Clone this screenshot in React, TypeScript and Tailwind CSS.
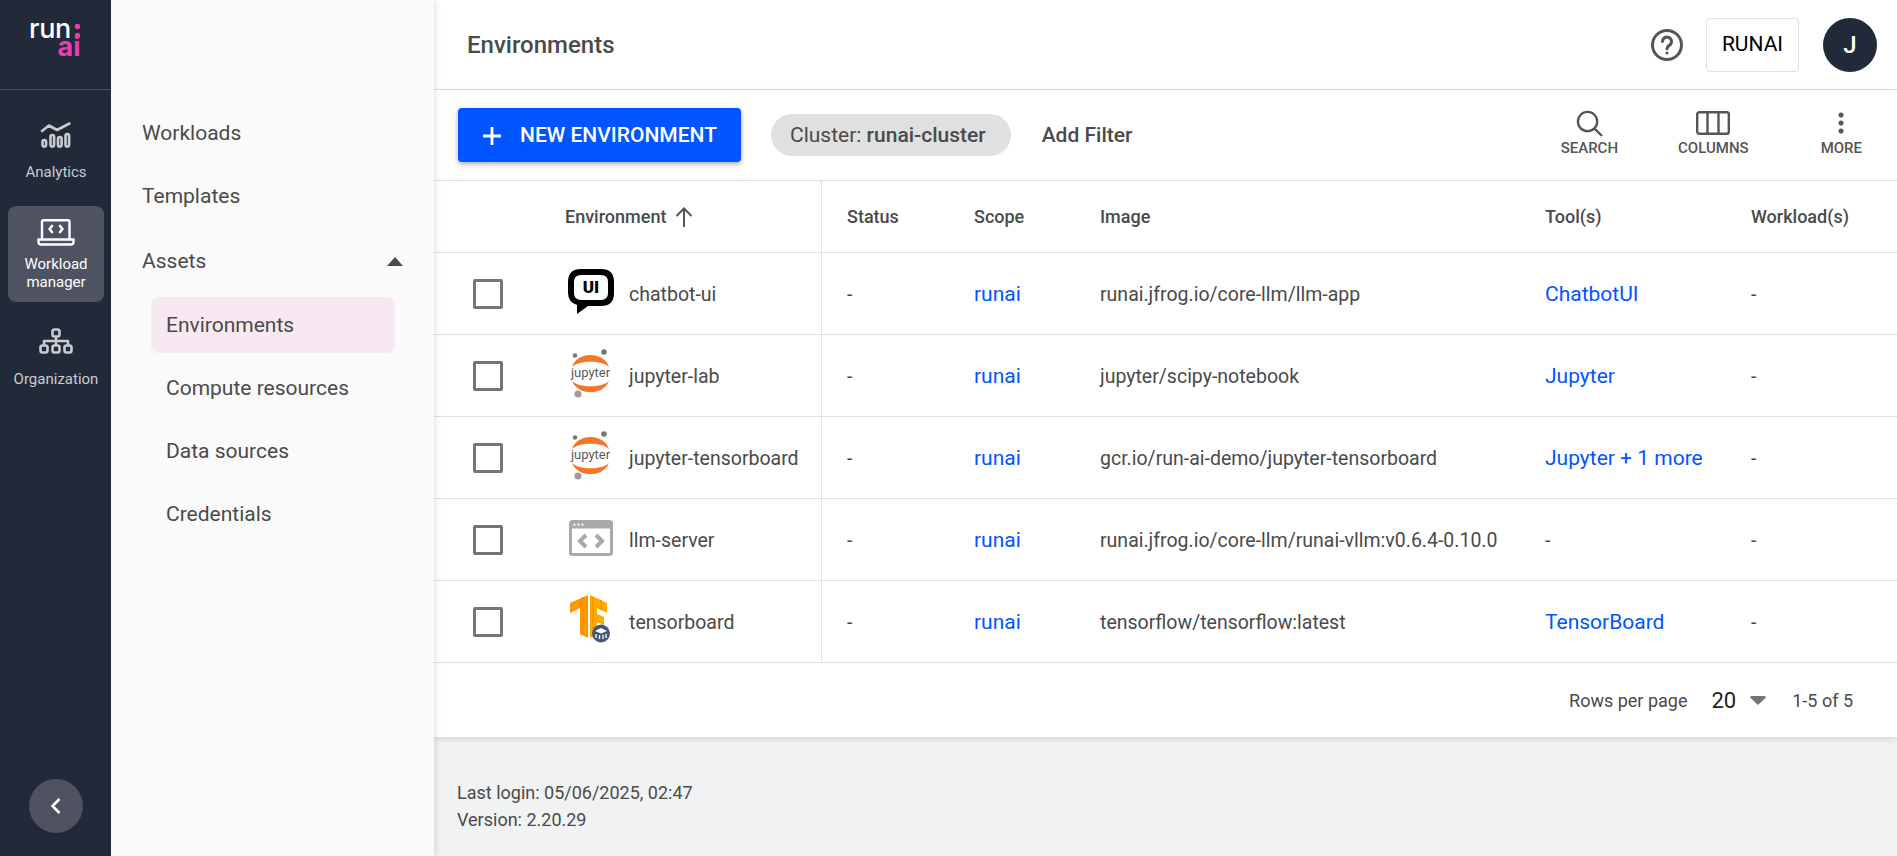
import { ReactNode } from 'react'

function BrandLogo() {
  return (
    <svg className="block" width="111" height="89" viewBox="0 0 111 89">
      <text x="29" y="38" fontFamily="Inter, sans-serif" fontSize="27" fontWeight="500" fill="#ffffff" letterSpacing="-0.3">run</text>
      <circle cx="77.5" cy="26.5" r="2.7" fill="#e83fae" />
      <circle cx="77.5" cy="35.5" r="2.7" fill="#e83fae" />
      <text x="80.5" y="56" textAnchor="end" fontFamily="Inter, sans-serif" fontSize="27" fontWeight="700" fill="#e83fae">ai</text>
    </svg>
  )
}

function AnalyticsIcon() {
  return (
    <svg className="block" width="32" height="26" viewBox="0 0 32 26" fill="none" stroke="#c9cbd0" strokeWidth="2.6" strokeLinecap="round" strokeLinejoin="round">
      <path d="M2 9 L9 3.5 L17 8 L29.5 1.5" />
      <rect x="2.5" y="18" width="3.6" height="6.5" rx="1.8" />
      <rect x="10.5" y="13" width="3.6" height="11.5" rx="1.8" />
      <rect x="18" y="15" width="3.6" height="9.5" rx="1.8" />
      <rect x="25.5" y="12" width="3.6" height="12.5" rx="1.8" />
    </svg>
  )
}

function WorkloadIcon() {
  return (
    <svg className="block" width="38" height="27" viewBox="0 0 38 27" fill="none" stroke="#ffffff" strokeWidth="2.4" strokeLinecap="round" strokeLinejoin="round">
      <path d="M5 19 V2.8 a1.5 1.5 0 0 1 1.5 -1.5 H31 a1.5 1.5 0 0 1 1.5 1.5 V19" />
      <path d="M1.5 20.5 H36.5 V23 a2.5 2.5 0 0 1 -2.5 2.5 H4 a2.5 2.5 0 0 1 -2.5 -2.5 Z" />
      <path d="M15 7 L12.5 10 L15 13 M23 7 L25.5 10 L23 13" strokeWidth="2.6" />
    </svg>
  )
}

function OrganizationIcon() {
  return (
    <svg className="block" width="34" height="26" viewBox="0 0 34 26" fill="none" stroke="#c9cbd0" strokeWidth="2.6" strokeLinejoin="round">
      <rect x="13.5" y="1.5" width="7" height="7" rx="2" />
      <rect x="1.5" y="17.5" width="7" height="7" rx="2" />
      <rect x="13.5" y="17.5" width="7" height="7" rx="2" />
      <rect x="25.5" y="17.5" width="7" height="7" rx="2" />
      <path d="M17 8.5 V17.5 M5 17.5 V13 H29 V17.5" />
    </svg>
  )
}

function ChatbotLogo() {
  return (
    <div className="relative w-[46px] h-[46px] mb-[4px]">
      <svg className="block" width="46" height="46" viewBox="0 0 46 46">
        <path d="M13 0 H33 Q46 0 46 13 V24 Q46 37 33 37 H20 L9 45 V36 Q0 33 0 24 V13 Q0 0 13 0 Z M13 6 Q6 6 6 13 V24 Q6 31 13 31 H33 Q40 31 40 24 V13 Q40 6 33 6 Z" fillRule="evenodd" fill="#000000" />
      </svg>
      <span className="absolute left-0 right-0 top-[9px] text-center text-[17px] leading-[19px] font-black text-black">UI</span>
    </div>
  )
}

function JupyterLogo() {
  return (
    <svg className="block mb-[5px]" width="44" height="49" viewBox="0 0 44 49">
      <circle cx="6" cy="6.5" r="2.2" fill="#767677" />
      <circle cx="35" cy="3" r="2.8" fill="#767677" />
      <circle cx="9" cy="45" r="3.6" fill="#9e9e9e" />
      <path d="M3 18 C8 2 35 2 40 18 C33 11 10 11 3 18 Z" fill="#f37726" />
      <path d="M3 32 C9 47 34 47 40 32 C33 39 10 39 3 32 Z" fill="#f37726" />
      <text x="21.5" y="28" textAnchor="middle" fontSize="13" fontFamily="Roboto, sans-serif" fill="#5a5a5a">jupyter</text>
    </svg>
  )
}

function ServerLogo() {
  return (
    <svg className="block mb-[4px]" width="44" height="36" viewBox="0 0 44 36">
      <rect x="1.5" y="1.5" width="41" height="33" rx="2" fill="none" stroke="#a9a9a9" strokeWidth="3" />
      <path d="M1 3 a2 2 0 0 1 2 -2 H41 a2 2 0 0 1 2 2 V8.5 H1 Z" fill="#a9a9a9" />
      <circle cx="5.5" cy="4.7" r="1.1" fill="#ffffff" />
      <circle cx="9.5" cy="4.7" r="1.1" fill="#ffffff" />
      <circle cx="13.5" cy="4.7" r="1.1" fill="#ffffff" />
      <path d="M17 15 L11 21 L17 27 M27 15 L33 21 L27 27" fill="none" stroke="#a9a9a9" strokeWidth="4" />
    </svg>
  )
}

function TensorLogo() {
  return (
    <svg className="block mb-[5px]" width="42" height="48" viewBox="0 0 42 48">
      <path d="M18 0 V43 L10 39 V13 L0 18 V8 Z" fill="#ff9800" />
      <path d="M20 0 L37 8 V18 L27 13 V19 L34 22 V30 L27 27 V39 L20 43 Z" fill="#ffa800" />
      <path d="M13 2 V40 M23 2 V42 M31 5 V15" stroke="#ff8f00" strokeWidth="1.6" />
      <circle cx="31" cy="38.5" r="9" fill="#44597a" />
      <path d="M25 36 L31 33 L37 36 L31 38.5 Z" fill="#ffffff" />
      <path d="M26 39 V43 M29.5 40 V44 M33 40 V44 M36 39 V43" stroke="#ffffff" strokeWidth="1.3" />
    </svg>
  )
}

type Row = {
  name: string
  logo: ReactNode
  image: string
  tool: string
}

const rows: Row[] = [
  { name: 'chatbot-ui', logo: <ChatbotLogo />, image: 'runai.jfrog.io/core-llm/llm-app', tool: 'ChatbotUI' },
  { name: 'jupyter-lab', logo: <JupyterLogo />, image: 'jupyter/scipy-notebook', tool: 'Jupyter' },
  { name: 'jupyter-tensorboard', logo: <JupyterLogo />, image: 'gcr.io/run-ai-demo/jupyter-tensorboard', tool: 'Jupyter + 1 more' },
  { name: 'llm-server', logo: <ServerLogo />, image: 'runai.jfrog.io/core-llm/runai-vllm:v0.6.4-0.10.0', tool: '-' },
  { name: 'tensorboard', logo: <TensorLogo />, image: 'tensorflow/tensorflow:latest', tool: 'TensorBoard' },
]

const rowGrid = 'grid grid-cols-[79px_309px_152px_126px_445px_206px_1fr] items-center border-b border-[#e0e0e0]'

function RailItem({ icon, label, active, top, gap }: { icon: ReactNode; label: ReactNode; active?: boolean; top: string; gap: string }) {
  return (
    <div className={`ml-2 mr-[7px] h-[96px] flex flex-col items-center ${top} ${active ? 'rounded-lg bg-[#4f5361] text-white' : 'text-[#c9cbd0]'}`}>
      <div className={gap}>{icon}</div>
      <div className="text-[15px] leading-[18px] text-center">{label}</div>
    </div>
  )
}

function ToolButton({ icon, label, className }: { icon: ReactNode; label: string; className?: string }) {
  return (
    <div className={`flex flex-col items-center text-[#555555] ${className ?? ''}`}>
      <div className="h-[28px] mb-[2px] flex items-center justify-center">{icon}</div>
      <div className="text-[15px] leading-[18px] font-medium">{label}</div>
    </div>
  )
}

export default function App() {
  return (
    <div className="flex h-[856px] w-[1897px] overflow-hidden bg-[#f1f2f4] font-['Roboto',sans-serif] text-[#4a4a4a]">
      {/* Icon rail */}
      <aside className="w-[111px] shrink-0 bg-[#222938] flex flex-col">
        <div className="h-[90px] border-b border-[#4a505e] shrink-0">
          <BrandLogo />
        </div>
        <div className="mt-[14px] flex flex-col gap-[6px]">
          <RailItem icon={<AnalyticsIcon />} label="Analytics" top="pt-[18px]" gap="mb-[15px]" />
          <RailItem icon={<WorkloadIcon />} label={<>Workload<br />manager</>} active top="pt-[13px]" gap="mb-[9px]" />
          <RailItem icon={<OrganizationIcon />} label="Organization" top="pt-[20px]" gap="mb-[16px]" />
        </div>
        <div className="mt-auto mb-[23px] self-center w-[54px] h-[54px] rounded-full bg-[#4f5361] flex items-center justify-center">
          <svg width="16" height="20" viewBox="0 0 16 20" fill="none" stroke="#ffffff" strokeWidth="2.6">
            <path d="M11.5 3 L4.5 10 L11.5 17" />
          </svg>
        </div>
      </aside>

      {/* Sub navigation */}
      <nav className="relative z-10 w-[323px] shrink-0 bg-[#fafafa] shadow-[2px_0_6px_rgba(0,0,0,0.1)] pt-[101px] text-[21px]">
        <div className="pl-[31px] pt-[2px] h-[63px] flex items-center">Workloads</div>
        <div className="pl-[31px] pt-[2px] h-[64px] flex items-center">Templates</div>
        <div className="pl-[31px] pr-[31px] h-[66px] flex items-center justify-between">
          <span className="pt-[2px]">Assets</span>
          <svg width="16" height="9" viewBox="0 0 16 9"><path d="M8 0 L16 9 H0 Z" fill="#4a4a4a" /></svg>
        </div>
        <div className="ml-[40px] mr-[39px] mt-[3px] flex flex-col">
          <div className="h-[56px] pl-[15px] pt-[1px] flex items-center rounded-lg bg-[#f8e8f1]">Environments</div>
          <div className="h-[63px] pl-[15px] pt-[2px] mt-[3px] flex items-center">Compute resources</div>
          <div className="h-[63px] pl-[15px] pt-[2px] flex items-center">Data sources</div>
          <div className="h-[63px] pl-[15px] pt-[2px] flex items-center">Credentials</div>
        </div>
      </nav>

      <main className="flex-1 min-w-0 flex flex-col">
        {/* Top bar */}
        <header className="h-[90px] shrink-0 bg-white border-b border-[#e0e0e0] flex items-center pl-[33px] pr-[20px]">
          <h1 className="text-[24px] font-medium">Environments</h1>
          <svg className="ml-auto" width="34" height="34" viewBox="0 0 34 34" fill="none" stroke="#555555" strokeWidth="3">
            <circle cx="17" cy="17" r="14.5" />
            <path d="M12.5 13.5 a4.5 4.5 0 1 1 6.8 3.9 c-1.5 0.9 -2.3 1.7 -2.3 3.4" strokeLinecap="round" />
            <circle cx="17" cy="25" r="0.8" fill="#555555" strokeWidth="1.4" />
          </svg>
          <div className="ml-[22px] w-[93px] h-[54px] rounded border border-[#e0e0e0] flex items-center justify-center text-[21px] text-black">RUNAI</div>
          <div className="ml-[24px] w-[54px] h-[54px] rounded-full bg-[#222938] text-white font-medium text-[24px] flex items-center justify-center">J</div>
        </header>

        <section className="bg-white shrink-0 shadow-[0_2px_6px_rgba(0,0,0,0.12)]">
          {/* Toolbar */}
          <div className="h-[91px] flex items-center pl-[24px] border-b border-[#e0e0e0] relative">
            <button className="h-[54px] w-[283px] rounded bg-[#0055ff] text-white text-[21px] font-medium flex items-center pl-[24px] pt-[1px] shadow-[0_2px_5px_rgba(0,0,0,0.35)]">
              <svg width="20" height="20" viewBox="0 0 20 20" stroke="#ffffff" strokeWidth="2.8"><path d="M10 1 V19 M1 10 H19" /></svg>
              <span className="ml-[18px] pt-[1px]">NEW ENVIRONMENT</span>
            </button>
            <div className="ml-[30px] h-[42px] pl-[19px] pr-[25px] pt-[2px] rounded-full bg-[#e0e0e0] flex items-center text-[21px]">
              <span>Cluster:&nbsp;</span><span className="font-medium">runai-cluster</span>
            </div>
            <div className="ml-[31px] pt-[2px] text-[21px] font-medium">Add Filter</div>
            <div className="ml-auto mr-[35px] mb-[4px] flex items-center">
              <ToolButton
                label="SEARCH"
                icon={
                  <svg width="27" height="27" viewBox="0 0 28 28" fill="none" stroke="#555555" strokeWidth="2.4">
                    <circle cx="12" cy="12" r="10" />
                    <path d="M19 19 L27 27" />
                  </svg>
                }
              />
              <ToolButton
                className="ml-[60px]"
                label="COLUMNS"
                icon={
                  <svg width="34" height="24" viewBox="0 0 34 24" fill="none" stroke="#555555" strokeWidth="2.4">
                    <rect x="1.2" y="1.2" width="31.6" height="21.6" rx="2" />
                    <path d="M11.5 1 V23 M22.5 1 V23" />
                  </svg>
                }
              />
              <ToolButton
                className="ml-[72px]"
                label="MORE"
                icon={
                  <svg width="6" height="22" viewBox="0 0 6 22" fill="#555555">
                    <circle cx="3" cy="3" r="2.5" />
                    <circle cx="3" cy="11" r="2.5" />
                    <circle cx="3" cy="19" r="2.5" />
                  </svg>
                }
              />
            </div>
          </div>

          {/* Table */}
          <div className={`${rowGrid} h-[72px] text-[18px] font-medium`}>
            <div />
            <div className="h-full flex items-center gap-[9px] border-r border-[#e0e0e0] pl-[52px]">
              Environment
              <svg width="18" height="20" viewBox="0 0 18 20" fill="none" stroke="#555555" strokeWidth="2"><path d="M9 20 V2 M1.5 9 L9 1.5 L16.5 9" /></svg>
            </div>
            <div className="pl-[25px]">Status</div>
            <div>Scope</div>
            <div>Image</div>
            <div>Tool(s)</div>
            <div>Workload(s)</div>
          </div>
          {rows.map((row) => (
            <div key={row.name} className={`${rowGrid} h-[82px] text-[19.5px]`}>
              <div className="pl-[39px]">
                <div className="w-[30px] h-[30px] rounded-[2px] border-[3px] border-[#757575]" />
              </div>
              <div className="h-full flex items-center border-r border-[#e0e0e0] pl-[55px]">
                <div className="w-[46px] flex justify-center shrink-0">{row.logo}</div>
                <span className="ml-[15px] pt-[2px]">{row.name}</span>
              </div>
              <div className="pl-[25px] pt-[2px]">-</div>
              <div className="pt-[2px] text-[#0055ff] text-[21px]">runai</div>
              <div className="pt-[2px]">{row.image}</div>
              <div className={row.tool === '-' ? 'pt-[2px]' : 'pt-[2px] text-[#0055ff] text-[21px]'}>{row.tool}</div>
              <div className="pt-[2px]">-</div>
            </div>
          ))}

          {/* Pagination */}
          <div className="h-[74px] flex items-center justify-end pr-[44px] text-[18px]">
            <span>Rows per page</span>
            <span className="ml-[24px] text-[22px] text-[#222222]">20</span>
            <svg className="ml-[14px]" width="16" height="9" viewBox="0 0 16 9"><path d="M0 1.5 Q0 0 1.5 0 H14.5 Q16 0 16 1.5 L8 9 Z" fill="#757575" /></svg>
            <span className="ml-[26px]">1-5 of 5</span>
          </div>
        </section>

        <footer className="pl-[23px] pt-[42px] text-[18px] leading-[27px]">
          <div>Last login: 05/06/2025, 02:47</div>
          <div>Version: 2.20.29</div>
        </footer>
      </main>
    </div>
  )
}
